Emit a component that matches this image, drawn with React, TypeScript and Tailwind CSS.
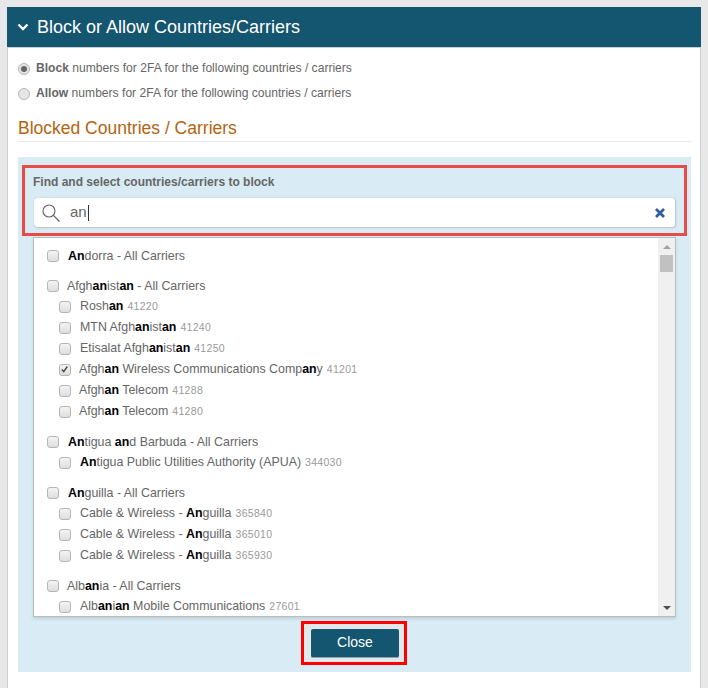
import { FC, Fragment, ReactNode } from "react";

const Mark: FC<{ text: string }> = ({ text }) => {
  // "an" is wrapped by the search highlight, whatever its case
  const parts = text.split(/(an)/i);
  return (
    <Fragment>
      {parts.map((part, i) =>
        i % 2 === 1 ? (
          <b key={i} className="font-bold text-black">
            {part}
          </b>
        ) : (
          <span key={i}>{part}</span>
        )
      )}
    </Fragment>
  );
};

const Check: FC<{ checked?: boolean }> = ({ checked }) => (
  <span className="relative w-[12px] h-[12px] shrink-0 rounded-[3px] border border-[#b5b5b5] bg-gradient-to-b from-[#f4f4f4] to-[#dedede]">
    {checked && (
      <svg viewBox="0 0 12 12" className="absolute left-0 top-0 w-[10px] h-[10px]">
        <path d="M2.2 5.5 L4.5 8 L8.8 1.8" fill="none" stroke="#444" strokeWidth="1.7" />
      </svg>
    )}
  </span>
);

const Group: FC<{ name: string; children?: ReactNode; ml?: string }> = ({ name, children, ml = "ml-[9px]" }) => (
  <div className="mb-[9px]">
    <div className="h-[21px] pl-[13px] flex items-center">
      <Check />
      <span className={`${ml} pt-[2px]`}>
        <Mark text={name} />
        <span> - All Carriers</span>
      </span>
    </div>
    {children}
  </div>
);

const Carrier: FC<{ name: string; code: string; checked?: boolean; ml?: string }> = ({
  name,
  code,
  checked,
  ml = "ml-[9px]",
}) => (
  <div className="h-[21px] pl-[25px] flex items-center">
    <Check checked={checked} />
    <span className={ml}>
      <Mark text={name} />
      <span className="text-[10.5px] tracking-[0.3px] text-[#9a9a9a] ml-[4px]">{code}</span>
    </span>
  </div>
);

const Radio: FC<{ checked?: boolean }> = ({ checked }) => (
  <span className="w-[12px] h-[12px] shrink-0 rounded-full border border-[#b5b5b5] bg-[#e6e6e6] flex items-center justify-center">
    {checked && <span className="w-[6px] h-[6px] rounded-full bg-[#666]" />}
  </span>
);

export default function App() {
  return (
    <div className="w-[708px] h-[688px] overflow-hidden bg-[#e8e8e8] pt-[7px] pl-[7px] font-['Liberation_Sans',Arial,sans-serif] text-[12px] text-[#666]">
      <div className="w-[694px] h-[681px] bg-white border-x border-[#d0d0d0]">
        <div className="-mx-px h-[41px] bg-[#14556f] flex items-center pl-[10px] text-white border-b border-[#c8d0d4]">
          <svg viewBox="0 0 12 8" className="w-[12px] h-[8px]">
            <path d="M1.5 1.5 L6 6 L10.5 1.5" fill="none" stroke="#fff" strokeWidth="2.4" />
          </svg>
          <span className="ml-[8px] text-[18px]">Block or Allow Countries/Carriers</span>
        </div>

        <div className="pl-[10px] pr-[9px] pt-[14px]">
          <div className="h-[13px] flex items-center text-[12.1px]">
            <Radio checked />
            <span className="ml-[6px]">
              <b className="font-bold">Block</b> numbers for 2FA for the following countries / carriers
            </span>
          </div>
          <div className="mt-[12px] h-[13px] flex items-center text-[12.1px]">
            <Radio />
            <span className="ml-[6px]">
              <b className="font-bold">Allow</b> numbers for 2FA for the following countries / carriers
            </span>
          </div>
          <div className="mt-[12px] h-[30px] pt-[3px] border-b border-[#eaeaea] text-[17.5px] leading-[26px] text-[#b5630f]">
            Blocked Countries / Carriers
          </div>

          <div className="mt-[15px] bg-[#d9ecf5] h-[515px] pt-[8px] px-[4px]">
            <div className="h-[71px] border-[3px] border-[#e84a45] pl-[8px] pr-[8px] pt-[6px]">
              <div className="font-bold h-[16px] leading-[16px]">Find and select countries/carriers to block</div>
              <div className="mt-[8px] ml-px h-[30px] bg-white rounded-[4px] border-b border-r border-[#c4c8ca] flex items-center pl-[7px] pr-[9px] shadow-[0_0_2px_rgba(0,0,0,0.15)]">
                <svg viewBox="0 0 20 20" className="w-[20px] h-[20px]">
                  <circle cx="8" cy="8" r="6" fill="none" stroke="#666" strokeWidth="1.1" />
                  <path d="M12.4 12.4 L18.5 18.5" stroke="#666" strokeWidth="1.3" />
                </svg>
                <span className="ml-[9px] text-[15px] text-[#666]">an</span>
                <span className="w-px h-[16px] bg-[#333] ml-px" />
                <svg viewBox="0 0 12 12" className="ml-auto w-[12px] h-[12px]">
                  <path d="M2 2 L10 10 M10 2 L2 10" stroke="#2f5f9e" strokeWidth="2.8" />
                </svg>
              </div>
            </div>

            <div className="mt-px mx-[11px] h-[380px] bg-white border border-[#bdbdbd] flex overflow-hidden shadow-[0_2px_3px_rgba(0,0,0,0.12)]">
              <div className="flex-1 overflow-hidden pt-[7px] text-[12.4px]">
                <Group name="Andorra" />
                <Group name="Afghanistan" ml="ml-[8px]">
                  <Carrier name="Roshan" code="41220" />
                  <Carrier name="MTN Afghanistan" code="41240" />
                  <Carrier name="Etisalat Afghanistan" code="41250" />
                  <Carrier name="Afghan Wireless Communications Company" code="41201" checked ml="ml-[8px]" />
                  <Carrier name="Afghan Telecom" code="41288" ml="ml-[8px]" />
                  <Carrier name="Afghan Telecom" code="41280" ml="ml-[8px]" />
                </Group>
                <Group name="Antigua and Barbuda">
                  <Carrier name="Antigua Public Utilities Authority (APUA)" code="344030" />
                </Group>
                <Group name="Anguilla">
                  <Carrier name="Cable & Wireless - Anguilla" code="365840" />
                  <Carrier name="Cable & Wireless - Anguilla" code="365010" />
                  <Carrier name="Cable & Wireless - Anguilla" code="365930" />
                </Group>
                <Group name="Albania" ml="ml-[8px]">
                  <Carrier name="Albanian Mobile Communications" code="27601" />
                </Group>
              </div>
              <div className="w-[17px] shrink-0 bg-[#f0f0f0] flex flex-col items-center">
                <div className="h-[17px] flex items-center justify-center">
                  <span className="w-0 h-0 border-x-[4px] border-x-transparent border-b-[4px] border-b-[#a3a3a3]" />
                </div>
                <div className="w-[13px] h-[17px] bg-[#c1c1c1]" />
                <div className="mt-auto h-[17px] flex items-center justify-center">
                  <span className="w-0 h-0 border-x-[4px] border-x-transparent border-t-[4px] border-t-[#505050]" />
                </div>
              </div>
            </div>

            <div className="mt-[4px] flex justify-center pr-px">
              <div className="w-[106px] h-[44px] border-[3px] border-[#f00] bg-[#e4e8ea] flex items-center justify-center pl-[2px]">
                <button className="w-[88px] h-[29px] rounded-[2px] bg-[#14556f] border-b border-[#8aa4b0] text-white text-[14px]">
                  Close
                </button>
              </div>
            </div>
          </div>
        </div>
      </div>
    </div>
  );
}
